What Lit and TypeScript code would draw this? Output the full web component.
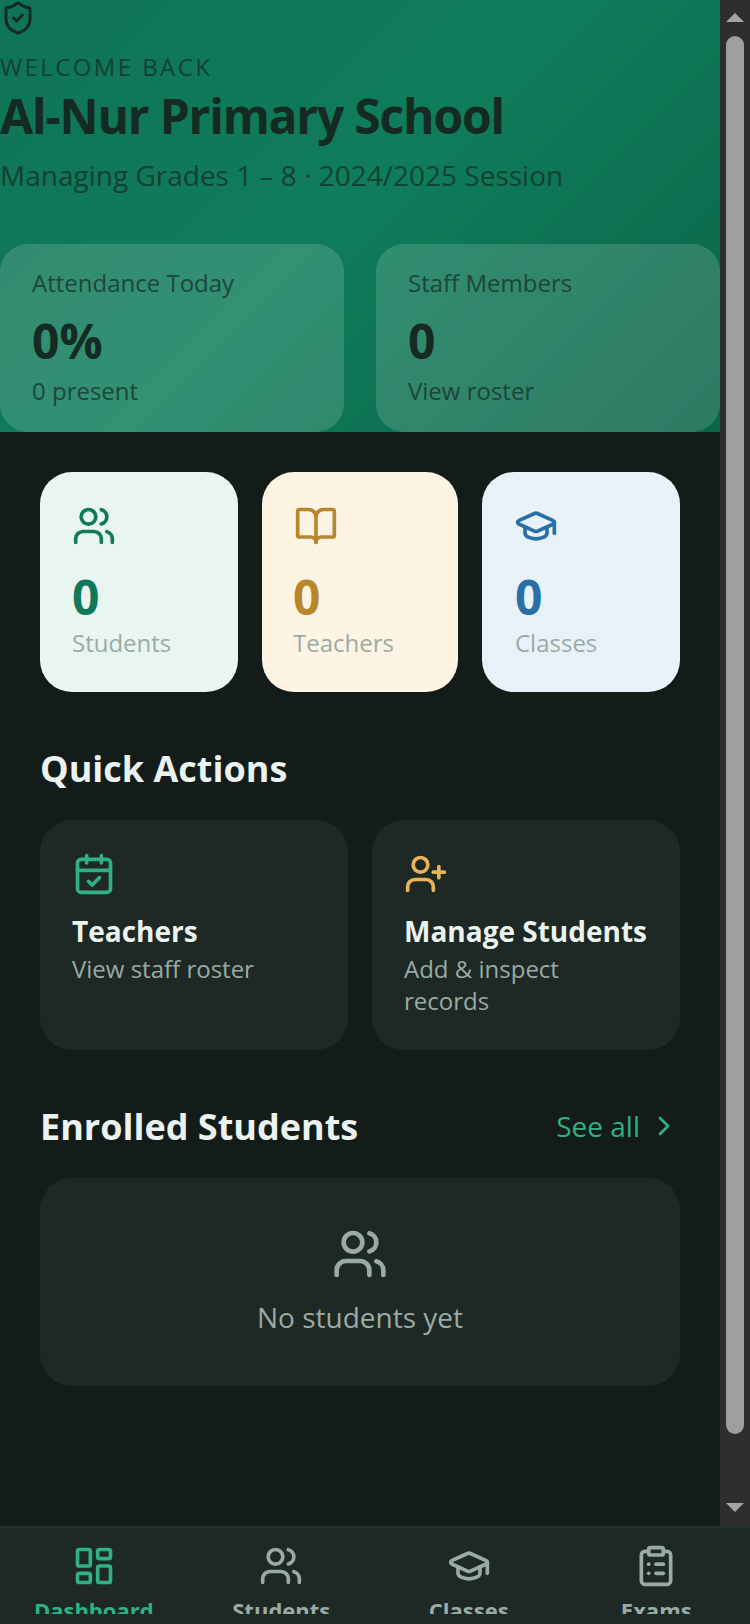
import { LitElement, html, css, svg } from "lit";
import { customElement } from "lit/decorators.js";

const ICONS: Record<string, any> = {
  shield: svg`<path d="M20 13c0 5-3.5 7.5-7.66 8.95a1 1 0 0 1-.67-.01C7.5 20.5 4 18 4 13V6a1 1 0 0 1 1-1c2 0 4.5-1.2 6.24-2.72a1.17 1.17 0 0 1 1.52 0C14.51 3.81 17 5 19 5a1 1 0 0 1 1 1z"/><path d="m9 12 2 2 4-4"/>`,
  users: svg`<path d="M16 21v-2a4 4 0 0 0-4-4H6a4 4 0 0 0-4 4v2"/><circle cx="9" cy="7" r="4"/><path d="M22 21v-2a4 4 0 0 0-3-3.87"/><path d="M16 3.13a4 4 0 0 1 0 7.75"/>`,
  book: svg`<path d="M12 7v14"/><path d="M3 18a1 1 0 0 1-1-1V4a1 1 0 0 1 1-1h5a4 4 0 0 1 4 4 4 4 0 0 1 4-4h5a1 1 0 0 1 1 1v13a1 1 0 0 1-1 1h-6a3 3 0 0 0-3 3 3 3 0 0 0-3-3z"/>`,
  cap: svg`<path d="M21.42 10.922a1 1 0 0 0-.019-1.838L12.83 5.18a2 2 0 0 0-1.66 0L2.6 9.08a1 1 0 0 0 0 1.832l8.57 3.908a2 2 0 0 0 1.66 0z"/><path d="M22 10v6"/><path d="M6 12.5V16a6 3 0 0 0 12 0v-3.5"/>`,
  calendar: svg`<path d="M8 2v4"/><path d="M16 2v4"/><rect x="3" y="4" width="18" height="18" rx="2"/><path d="M3 10h18"/><path d="m9 16 2 2 4-4"/>`,
  userplus: svg`<path d="M16 21v-2a4 4 0 0 0-4-4H6a4 4 0 0 0-4 4v2"/><circle cx="9" cy="7" r="4"/><path d="M19 8v6"/><path d="M22 11h-6"/>`,
  chevron: svg`<path d="m9 18 6-6-6-6"/>`,
  dashboard: svg`<rect x="3" y="3" width="7" height="9" rx="1"/><rect x="14" y="3" width="7" height="5" rx="1"/><rect x="14" y="12" width="7" height="9" rx="1"/><rect x="3" y="16" width="7" height="5" rx="1"/>`,
  clipboard: svg`<rect x="8" y="2" width="8" height="4" rx="1"/><path d="M16 4h2a2 2 0 0 1 2 2v14a2 2 0 0 1-2 2H6a2 2 0 0 1-2-2V6a2 2 0 0 1 2-2h2"/><path d="M12 11h4"/><path d="M12 16h4"/><path d="M8 11h.01"/><path d="M8 16h.01"/>`,
};

const icon = (name: string, size: number) => html`<svg class="ic" width=${size} height=${size} viewBox="0 0 24 24" fill="none" stroke="currentColor" stroke-width="2" stroke-linecap="round" stroke-linejoin="round">${ICONS[name]}</svg>`;

@customElement("app-root")
export class AppRoot extends LitElement {
  static styles = css`
    :host { display: flex; flex-direction: column; width: 750px; height: 1624px; overflow: hidden; background: #141c1a; font-family: "Open Sans", sans-serif; color: #eaf3ef; }
    * { box-sizing: border-box; }
    .ic { display: block; flex: none; }
    .top { display: flex; height: 1526px; flex: none; }
    .page { width: 720px; flex: none; overflow: hidden; }
    .bar { width: 30px; flex: none; background: #2e2e2e; display: flex; flex-direction: column; align-items: center; }
    .arrow { width: 0; height: 0; border-left: 9px solid transparent; border-right: 9px solid transparent; flex: none; }
    .arrow.up { margin-top: 13px; border-bottom: 9px solid #a3a3a3; }
    .arrow.down { margin-top: 69px; border-top: 9px solid #a3a3a3; }
    .thumb { width: 18px; height: 1398px; margin-top: 14px; border-radius: 9px; background: #9e9e9e; flex: none; }

    .hero { height: 432px; color: #142a23; background: linear-gradient(135deg, #107356 0%, #0f7d5b 48%, #0a6448 100%); }
    .eyebrow { margin-top: 15px; font-size: 24px; line-height: 32px; letter-spacing: 2.4px; opacity: .7; }
    .hero h1 { margin: 1px 0 0; font-size: 48px; line-height: 64px; font-weight: 700; letter-spacing: -1.2px; color: #142a23; }
    .tag { margin-top: 7px; font-size: 28px; line-height: 40px; opacity: .7; }
    .glass { display: grid; grid-template-columns: 344px 344px; gap: 32px; margin-top: 49px; }
    .gl { height: 188px; border-radius: 28px; padding: 23px 32px 0; background: rgba(255,255,255,.15); }
    .gl .l { font-size: 24px; line-height: 32px; opacity: .7; }
    .gl .v { margin-top: 11px; font-size: 48px; line-height: 62px; font-weight: 700; }
    .gl .s { margin-top: 3px; font-size: 24px; line-height: 32px; opacity: .7; }

    .body { padding: 40px 40px 0; }
    .stats { display: grid; grid-template-columns: 198px 196px 198px; gap: 24px; }
    .st { height: 220px; border-radius: 32px; padding: 32px; }
    .st .n { margin-top: 21px; font-size: 48px; line-height: 56px; font-weight: 700; }
    .st .t { margin-top: 2px; font-size: 24px; line-height: 32px; color: #9aaba5; white-space: nowrap; }
    .mint { background: #e8f5f1; color: #0f7a5a; }
    .sand { background: #fdf4e4; color: #b8862d; }
    .sky { background: #e8f1f8; color: #2a6fa8; }
    .sand .n, .sand .t { margin-left: -1px; }
    .sky .n, .sky .t { margin-left: 1px; }

    h2 { margin: 0; font-size: 36px; line-height: 48px; font-weight: 700; color: #eaf3ef; }
    .qt { margin-top: 53px; }
    .quick { display: grid; grid-template-columns: 1fr 1fr; gap: 24px; margin-top: 27px; }
    .q { height: 230px; border-radius: 32px; padding: 32px; background: #1e2824; }
    .q .t { margin-top: 17px; font-size: 28px; line-height: 36px; font-weight: 700; color: #eaf3ef; }
    .q .d { margin-top: 4px; font-size: 24px; line-height: 32px; color: #9aaba5; }
    .green { color: #2fb183; }
    .amber { color: #e8b45a; }

    .head { display: flex; justify-content: space-between; align-items: center; margin-top: 53px; }
    .all { display: flex; align-items: center; gap: 8px; padding-bottom: 2px; font-size: 28px; color: #2fb183; }
    .empty { margin-top: 27px; height: 208px; border-radius: 32px; background: #1e2824; display: flex; flex-direction: column; align-items: center; padding-top: 48px; color: #9aaba5; }
    .empty p { margin: 17px 0 0; font-size: 28px; line-height: 36px; }

    nav { flex: none; height: 98px; display: grid; grid-template-columns: repeat(4, 1fr); background: #1e2824; border-top: 2px solid #26312e; padding-top: 16px; }
    .tab { height: 70px; overflow: hidden; display: flex; flex-direction: column; align-items: center; color: #9aaba5; font-size: 22px; font-weight: 700; line-height: 32px; }
    .tab span { margin-top: 6px; }
    .tab.on { color: #2fb183; }
  `;

  render() {
    return html`
      <div class="top">
        <div class="page">
          <header class="hero">
            ${icon("shield", 36)}
            <div class="eyebrow">WELCOME BACK</div>
            <h1>Al-Nur Primary School</h1>
            <div class="tag">Managing Grades 1 – 8 · 2024/2025 Session</div>
            <div class="glass">
              <div class="gl"><div class="l">Attendance Today</div><div class="v">0%</div><div class="s">0 present</div></div>
              <div class="gl"><div class="l">Staff Members</div><div class="v">0</div><div class="s">View roster</div></div>
            </div>
          </header>
          <div class="body">
            <div class="stats">
              <div class="st mint">${icon("users", 44)}<div class="n">0</div><div class="t">Students</div></div>
              <div class="st sand">${icon("book", 44)}<div class="n">0</div><div class="t">Teachers</div></div>
              <div class="st sky">${icon("cap", 44)}<div class="n">0</div><div class="t">Classes</div></div>
            </div>
            <h2 class="qt">Quick Actions</h2>
            <div class="quick">
              <div class="q"><div class="green">${icon("calendar", 44)}</div><div class="t">Teachers</div><div class="d">View staff roster</div></div>
              <div class="q"><div class="amber">${icon("userplus", 44)}</div><div class="t">Manage Students</div><div class="d">Add &amp; inspect records</div></div>
            </div>
            <div class="head"><h2>Enrolled Students</h2><div class="all">See all ${icon("chevron", 32)}</div></div>
            <div class="empty">${icon("users", 56)}<p>No students yet</p></div>
          </div>
        </div>
        <div class="bar"><div class="arrow up"></div><div class="thumb"></div><div class="arrow down"></div></div>
      </div>
      <nav>
        <div class="tab on">${icon("dashboard", 44)}<span>Dashboard</span></div>
        <div class="tab">${icon("users", 44)}<span>Students</span></div>
        <div class="tab">${icon("cap", 44)}<span>Classes</span></div>
        <div class="tab">${icon("clipboard", 44)}<span>Exams</span></div>
      </nav>
    `;
  }
}
